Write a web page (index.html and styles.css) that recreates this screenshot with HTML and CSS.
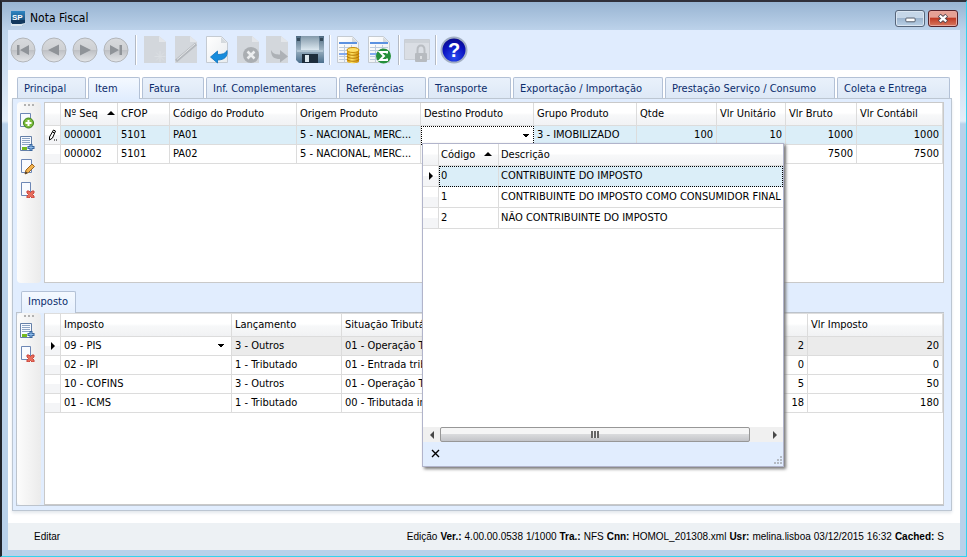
FILE: index.html
```html
<!DOCTYPE html>
<html lang="pt-BR">
<head>
<meta charset="utf-8">
<title>Nota Fiscal</title>
<link rel="stylesheet" href="styles.css">
</head>
<body>
<svg class="defs" aria-hidden="true">
  <defs>
    <linearGradient id="orb" x1="0" y1="0" x2="0" y2="1"><stop offset="0" stop-color="#d8dadd"/><stop offset=".48" stop-color="#cfd1d4"/><stop offset=".52" stop-color="#bfc1c5"/><stop offset="1" stop-color="#e4e6e9"/></linearGradient>
    <linearGradient id="paper" x1="0" y1="0" x2="1" y2="1"><stop offset="0" stop-color="#ffffff"/><stop offset="1" stop-color="#e9ecef"/></linearGradient>
    <linearGradient id="disk" x1="0" y1="0" x2="0" y2="1"><stop offset="0" stop-color="#4f6b82"/><stop offset=".5" stop-color="#9fb4c4"/><stop offset="1" stop-color="#4b6f8d"/></linearGradient>
    <linearGradient id="shutter" x1="0" y1="0" x2="0" y2="1"><stop offset="0" stop-color="#8399aa"/><stop offset="1" stop-color="#dce8f0"/></linearGradient>
    <linearGradient id="gold" x1="0" x2="1"><stop offset="0" stop-color="#d99a08"/><stop offset=".4" stop-color="#ffe468"/><stop offset="1" stop-color="#cc8800"/></linearGradient>
    <linearGradient id="app" x1="0" y1="0" x2="0" y2="1"><stop offset="0" stop-color="#2f86c4"/><stop offset="1" stop-color="#0b2f55"/></linearGradient>
    <radialGradient id="help" cx=".5" cy=".8" r=".8"><stop offset="0" stop-color="#2a4cf0"/><stop offset=".6" stop-color="#0a12c0"/><stop offset="1" stop-color="#0a0a84"/></radialGradient>
    <symbol id="page-off" viewBox="0 0 30 30"><path d="M4 1h15l7 6v21H4z" fill="#d3d7dc"/><path d="M19 1v6h7z" fill="#e3e6ea"/></symbol>
    <symbol id="page-on" viewBox="0 0 30 30"><path d="M4.500 1.500h15l6 6v20h-21z" fill="url(#paper)" stroke="#c5cbd2"/><path d="M19 2v6h6z" fill="#d5dade"/></symbol>
    <symbol id="sheet" viewBox="0 0 30 30"><path d="M3.500 1.500h15l6 6v20h-21z" fill="url(#paper)" stroke="#c5cbd2"/><path d="M18 2v6h6z" fill="#d5dade"/><path d="M5 7h18v2H5z" fill="#5b91e0"/><path d="M5 12.500h18M5 15.500h18M5 21.500h18M5 24.500h18M10.500 10v17M17.500 10v17" stroke="#bdcbdd"/><path d="M5 18h16v2H5z" fill="#82aaf0"/></symbol>
    <symbol id="add-lines" viewBox="0 0 16 16"><path d="M1.500.5h11v14h-11z" fill="#f7faff" stroke="#6580a8"/><path d="M3 2.500h8M3 4.500h8M3 6.500h8M3 8.500h8" stroke="#8ea5c4"/><path d="M3 11h5v3H3z" fill="#75b91f"/><path d="M12 8v7M8.500 11.500h7" stroke="#39669d" stroke-width="3"/><path d="M12 9v5M9.500 11.500h5" stroke="#8ebcec"/></symbol>
    <symbol id="remove" viewBox="0 0 16 16"><path d="M2.500.5h9v13h-9z" fill="#f9fbff" stroke="#6d87b5"/><path d="M8 9h2l1.500 1.500L13 9h2v2l-1.500 1.500L15 14v2h-2l-1.500-1.500L10 16H8v-2l1.500-1.500L8 11z" fill="#e76d5c" stroke="#c9473c"/></symbol>
  </defs>
</svg>
<div class="window">
  <header class="titlebar">
    <svg class="app-icon" viewBox="0 0 16 16"><path d="M1 1h14v12l-3 3H1z" fill="url(#app)"/><path d="M1 13l7-2 8 2-4 3H1z" fill="#d9e6ef"/><path d="M2 14h9l4-1v-3H1z" fill="#12385e"/><text x="2" y="10" class="app-mark">SP</text></svg>
    <h1>Nota Fiscal</h1>
    <button class="win-btn" aria-label="Minimizar"><svg viewBox="0 0 30 16"><rect x="10.500" y="7.500" width="10" height="4" rx="1" fill="#fff" stroke="#4b5463"/></svg></button>
    <button class="win-btn close" aria-label="Fechar"><svg viewBox="0 0 30 16"><path d="M11 4.500l8 7M19 4.500l-8 7" stroke="#4e4550" stroke-width="4.500"/><path d="M11.500 5l7 6M18.500 5l-7 6" stroke="#fff" stroke-width="2.500"/></svg></button>
  </header>
  <nav class="toolbar" aria-label="Ferramentas">
    <button aria-label="Primeiro"><svg viewBox="0 0 30 30"><circle cx="15" cy="15" r="12" fill="url(#orb)" stroke="#b3b6ba"/><path d="M9 10h2.500v10H9zM21 10v10l-9-5z" fill="#8f9398"/></svg></button>
    <button aria-label="Anterior"><svg viewBox="0 0 30 30"><circle cx="15" cy="15" r="12" fill="url(#orb)" stroke="#b3b6ba"/><path d="M20 9.500v11L9 15z" fill="#8f9398"/></svg></button>
    <button aria-label="Próximo"><svg viewBox="0 0 30 30"><circle cx="15" cy="15" r="12" fill="url(#orb)" stroke="#b3b6ba"/><path d="M10 9.500v11L21 15z" fill="#8f9398"/></svg></button>
    <button aria-label="Último"><svg viewBox="0 0 30 30"><circle cx="15" cy="15" r="12" fill="url(#orb)" stroke="#b3b6ba"/><path d="M18.500 10H21v10h-2.500zM9 10v10l9-5z" fill="#8f9398"/></svg></button>
    <span class="sep"></span>
    <button aria-label="Novo"><svg viewBox="0 0 30 30"><use href="#page-off"/><path d="M20 16v11M14.500 21.500h11M16 17.500l8 8M24 17.500l-8 8" stroke="#dbdfe3"/></svg></button>
    <button aria-label="Alterar"><svg viewBox="0 0 30 30"><use href="#page-off"/><path d="M5 26L25 9" stroke="#b4b8bd" stroke-width="3"/><path d="M6 24.500L24 9" stroke="#e6e8ea"/></svg></button>
    <button aria-label="Desfazer"><svg viewBox="0 0 30 30"><use href="#page-on"/><path d="M8.500 22l7-6v3.500c5 0 8-1 9.500-4 1 6-2.500 9.500-9.500 9.500v3z" fill="#168cdd" stroke="#0b71bd" stroke-width=".8"/></svg></button>
    <button aria-label="Cancelar"><svg viewBox="0 0 30 30"><use href="#page-off"/><circle cx="18" cy="20" r="8" fill="#aaaeb2"/><path d="M14.500 16.500l7 7M21.500 16.500l-7 7" stroke="#eceef0" stroke-width="2.500"/></svg></button>
    <button aria-label="Avançar"><svg viewBox="0 0 30 30"><g transform="translate(-2)"><use href="#page-off"/><path d="M9 15c2 4 5 4.500 9 4.500V15l8 6.500-8 6v-3.500c-6 0-9-2-9-9z" fill="#adb1b6"/></g></svg></button>
    <button aria-label="Salvar"><svg viewBox="0 0 30 30"><path d="M1 1h28v27H4l-3-3z" fill="url(#disk)"/><path d="M6 1h18v14H6z" fill="url(#shutter)"/><path d="M2 3h3v3H2zM25 3h3v3h-3z" fill="#334859"/><path d="M7 19h16v9H7z" fill="#1d2d3c"/><path d="M10 20h4v7h-4z" fill="#dce7ee"/><path d="M2 16h26" stroke="#cbdbe6"/></svg></button>
    <span class="sep"></span>
    <button aria-label="Financeiro"><svg viewBox="0 0 30 30"><use href="#sheet"/><path d="M13 15v11c0 3 12 3 12 0V15z" fill="url(#gold)"/><path d="M13 18c0 3 12 3 12 0M13 21c0 3 12 3 12 0M13 24c0 3 12 3 12 0" fill="none" stroke="#b57905"/><ellipse cx="19" cy="15" rx="6" ry="2.500" fill="#ffe067" stroke="#c78d0c"/></svg></button>
    <button aria-label="Totais"><svg viewBox="0 0 30 30"><use href="#sheet"/><circle cx="18.500" cy="21" r="7.500" fill="#25903a"/><path d="M22 18.500V17h-7l4 4-4 4h7v-1.500" fill="none" stroke="#fff" stroke-width="2"/></svg></button>
    <span class="sep tight"></span>
    <button aria-label="Bloquear"><svg viewBox="0 0 30 30"><path d="M2.500 4.500h25v20h-25z" fill="#dadee4" stroke="#c9ced5"/><path d="M3 5h24v3H3z" fill="#cdd2d8"/><path d="M15.500 18v-3c0-6 7-6 7 0v3" fill="none" stroke="#b9bdc2" stroke-width="2"/><rect x="13" y="18" width="12" height="9" rx="1" fill="#b7bbc0"/><path d="M19 21v3" stroke="#dcdfe2" stroke-width="2"/></svg></button>
    <span class="sep tight"></span>
    <button aria-label="Ajuda"><svg viewBox="0 0 30 30"><circle cx="15" cy="15" r="12.500" fill="url(#help)" stroke="#a2afc4" stroke-width="2"/><text x="15" y="22" text-anchor="middle" class="help-mark">?</text></svg></button>
  </nav>
  <main>
    <div class="tabs" role="tablist">
      <button role="tab">Principal</button><button role="tab" class="on" aria-selected="true">Item</button><button role="tab">Fatura</button><button role="tab">Inf. Complementares</button><button role="tab">Referências</button><button role="tab">Transporte</button><button role="tab">Exportação / Importação</button><button role="tab">Prestação Serviço / Consumo</button><button role="tab">Coleta e Entrega</button>
    </div>
    <div class="panel">
      <section class="items">
        <div class="side">
          <i class="grip"></i>
          <button aria-label="Adicionar item"><svg viewBox="0 0 16 16"><path d="M1.500.5h10v13h-10z" fill="#f9fbff" stroke="#6d87b5"/><circle cx="9.500" cy="10" r="5" fill="#7dbb3a" stroke="#3d8418"/><path d="M9.500 7v6M6.500 10h6" stroke="#fff" stroke-width="2"/></svg></button>
          <button aria-label="Adicionar vários"><svg><use href="#add-lines"/></svg></button>
          <button aria-label="Editar item"><svg viewBox="0 0 16 16"><path d="M2.500.5h10v13h-10z" fill="#f9fbff" stroke="#6d87b5"/><path d="M6 15l1-4 6-6 2.500 2.500-6 6z" fill="#f1b24d" stroke="#9a6322"/><path d="M6 15l.8-2.500L8.500 14z" fill="#333"/></svg></button>
          <button aria-label="Remover item"><svg><use href="#remove"/></svg></button>
        </div>
        <div class="grid">
          <table>
            <colgroup><col class="c-sel"><col class="c-seq"><col class="c-cfop"><col class="c-cod"><col class="c-ori"><col class="c-des"><col class="c-gru"><col class="c-qtd"><col class="c-uni"><col class="c-bru"><col></colgroup>
            <thead><tr><th></th><th>Nº Seq<i class="sort"></i></th><th>CFOP</th><th>Código do Produto</th><th>Origem Produto</th><th>Destino Produto</th><th>Grupo Produto</th><th>Qtde</th><th>Vlr Unitário</th><th>Vlr Bruto</th><th>Vlr Contábil</th></tr></thead>
            <tbody>
              <tr class="current"><th class="sel"><svg class="pencil" viewBox="0 0 9 12"><path d="M5.500 1l2 1-3 7-3 2V8z" fill="#fff" stroke="#000"/><path d="M4.500 3l2 1M6 11h1M8 11h1" stroke="#000"/></svg></th><td>000001</td><td>5101</td><td>PA01</td><td>5 - NACIONAL, MERC...</td>
                <td class="editing"><div class="combo"><select aria-label="Destino Produto"><option></option></select>
                  <div class="popup">
                    <table>
                      <colgroup><col class="c-sel"><col class="c-key"><col></colgroup>
                      <thead><tr><th></th><th>Código<i class="sort"></i></th><th>Descrição</th></tr></thead>
                      <tbody>
                        <tr class="picked"><th class="sel"><i class="pointer"></i></th><td>0</td><td>CONTRIBUINTE DO IMPOSTO</td></tr>
                        <tr><th class="sel"></th><td>1</td><td>CONTRIBUINTE DO IMPOSTO COMO CONSUMIDOR FINAL</td></tr>
                        <tr><th class="sel"></th><td>2</td><td>NÃO CONTRIBUINTE DO IMPOSTO</td></tr>
                      </tbody>
                    </table>
                    <div class="scroll"><button aria-label="Rolar à esquerda"><i class="pointer back"></i></button><span class="track"><span class="thumb"><i></i></span></span><button aria-label="Rolar à direita"><i class="pointer"></i></button></div>
                    <div class="popup-foot"><button aria-label="Fechar lista"><svg viewBox="0 0 9 9"><path d="M1 1l7 7M8 1L1 8" stroke="#000" stroke-width="1.400"/></svg></button><svg class="resize" viewBox="0 0 9 9"><path d="M7 1h2M4 4h2M7 4h2M1 7h2M4 7h2M7 7h2" stroke="#b4bac3" stroke-width="2"/></svg></div>
                  </div>
                </div></td>
                <td>3 - IMOBILIZADO</td><td class="num">100</td><td class="num">10</td><td class="num">1000</td><td class="num">1000</td></tr>
              <tr><th class="sel"></th><td>000002</td><td>5101</td><td>PA02</td><td>5 - NACIONAL, MERC...</td><td></td><td></td><td></td><td></td><td class="num">7500</td><td class="num">7500</td></tr>
            </tbody>
          </table>
        </div>
      </section>
      <div class="subtabs" role="tablist"><button role="tab" aria-selected="true">Imposto</button></div>
      <section class="taxes">
        <div class="side">
          <i class="grip"></i>
          <button aria-label="Adicionar imposto"><svg><use href="#add-lines"/></svg></button>
          <button aria-label="Remover imposto"><svg><use href="#remove"/></svg></button>
        </div>
        <div class="grid">
          <table>
            <colgroup><col class="c-sel"><col class="c-imp"><col class="c-lan"><col><col class="c-ali"><col class="c-vlr"></colgroup>
            <thead><tr><th></th><th>Imposto</th><th>Lançamento</th><th>Situação Tributária</th><th></th><th>Vlr Imposto</th></tr></thead>
            <tbody>
              <tr class="focus"><th class="sel"><i class="pointer"></i></th><td class="choice"><select aria-label="Imposto"><option>09 - PIS</option></select></td><td>3 - Outros</td><td>01 - Operação Tributável</td><td class="num">2</td><td class="num">20</td></tr>
              <tr><th class="sel"></th><td>02 - IPI</td><td>1 - Tributado</td><td>01 - Entrada tributada</td><td class="num">0</td><td class="num">0</td></tr>
              <tr><th class="sel"></th><td>10 - COFINS</td><td>3 - Outros</td><td>01 - Operação Tributável</td><td class="num">5</td><td class="num">50</td></tr>
              <tr><th class="sel"></th><td>01 - ICMS</td><td>1 - Tributado</td><td>00 - Tributada integralmente</td><td class="num">18</td><td class="num">180</td></tr>
            </tbody>
          </table>
        </div>
      </section>
    </div>
  </main>
  <footer class="status"><span>Editar</span><span class="info"><span>Edição</span><b>Ver.:</b><span>4.00.00.0538</span><span>1/1000</span><b>Tra.:</b><span>NFS</span><b>Cnn:</b><span>HOMOL_201308.xml</span><b>Usr:</b><span>melina.lisboa</span><span>03/12/2015</span><span>16:32</span><b>Cached:</b><span>S</span></span></footer>
</div>
</body>
</html>
```
FILE: styles.css
```css
* { box-sizing: border-box; }
body { margin: 0; font-family: Tahoma, "DejaVu Sans Condensed", "DejaVu Sans", sans-serif; font-size: 11px; line-height: 14px; color: #000; }
button, select { font: inherit; color: inherit; border: 0; padding: 0; margin: 0; background: none; }
.defs { position: absolute; width: 0; height: 0; }
.window { height: 100vh; display: flex; flex-direction: column; padding: 0 6px 6px; border: 1px solid #35d3ee; border-top: 2px solid #30303a; border-left: 2px solid #20242c; background: linear-gradient(#98b4d2, #bcd2ea 28px, #e4eef9 119px, #b9d1ea 122px); }
.titlebar { height: 28px; display: flex; align-items: center; gap: 3px; padding: 4px 2px 0; }
.app-icon { width: 16px; height: 16px; margin-right: 1px; }
.app-mark { font: bold 8px "Liberation Sans", sans-serif; fill: #fff; }
h1 { flex: 1; margin: 0; font-size: 12px; font-weight: normal; }
.win-btn { width: 30px; height: 17px; border: 1px solid #56657a; border-radius: 3px; box-shadow: inset 0 0 0 1px #dbe6f2; background: linear-gradient(#c5d6e8 45%, #9db5cf 50%, #b9d0e6); }
.win-btn svg { display: block; width: 100%; height: 100%; }
.win-btn.close { border-color: #55222a; box-shadow: inset 0 0 0 1px #e8a79e; background: linear-gradient(#e5a195 40%, #c03c26 50%, #d7785f); }
.toolbar { height: 40px; display: flex; align-items: center; background: #e0ecfe; }
.toolbar button { width: 31px; height: 32px; }
.toolbar svg { display: block; width: 30px; height: 30px; }
.sep { width: 2px; height: 30px; margin: 0 3px; border-left: 1px solid #b4bac4; border-right: 1px solid #fff; }
.sep.tight { margin: 0 2px; }
.help-mark { font: bold 20px "Liberation Sans", sans-serif; fill: #fff; }
main { flex: 1; min-height: 0; display: flex; flex-direction: column; padding: 7px 8px 12px 4px; background: #fff; }
.tabs { display: grid; grid-template-columns: 69fr 52fr 62fr 131fr 87fr 83fr 150fr 170fr 113fr; gap: 2px; margin: 0 2px 0 5px; height: 21px; }
.tabs button, .subtabs button { text-align: left; padding: 0 6px; white-space: nowrap; color: #0b2c6c; border: 1px solid #b3c1d6; border-bottom: 0; border-radius: 2px 2px 0 0; background: linear-gradient(#e9f1fb, #dde8f6); }
.tabs .on { height: 22px; z-index: 1; background: linear-gradient(#f4f9ff, #e1edfe); }
.panel { flex: 1; min-height: 0; display: flex; flex-direction: column; padding: 3px 7px 4px 4px; border: 1px solid #bcc6d2; background: #e1edfe; box-shadow: 0 2px 3px #e3e7ec; }
.items { flex: 181 1 0; min-height: 0; display: flex; gap: 3px; }
.taxes { flex: 193 1 0; min-height: 0; display: flex; gap: 3px; border: 1px solid #bcc3cc; border-width: 1px 0 1px 1px; margin-left: -1px; }
.side { width: 24px; display: flex; flex-direction: column; align-items: center; border-radius: 4px; background: linear-gradient(90deg, #fcfcfc, #ebebeb); }
.grip { width: 10px; height: 2px; margin: 2px 0 3px; background: repeating-linear-gradient(90deg, #b2b2b2 0 2px, transparent 2px 4px); }
.side button { width: 20px; height: 23px; display: flex; align-items: center; }
.side svg { display: block; width: 16px; height: 16px; }
.grid { flex: 1; min-width: 0; border: 1px solid #c9c9c9; background: #fff; }
.taxes .grid { border-top-color: #ddd; }
table { width: 100%; table-layout: fixed; border-collapse: separate; border-spacing: 0; }
th, td { height: 19px; padding: 0 3px; font-weight: normal; text-align: left; white-space: nowrap; overflow: hidden; border-right: 1px solid #dcdcdc; border-bottom: 1px solid #dcdcdc; }
thead th { height: 23px; background: linear-gradient(#fff 45%, #f7f8f9 55%, #f1f2f4); }
.sel { padding: 0; text-align: center; background: linear-gradient(#fff 50%, #f4f5f7 50%); }
.num { text-align: right; }
.c-sel { width: 16px; }
.c-seq { width: 57px; }
.c-cfop { width: 52px; }
.c-cod { width: 127px; }
.c-ori { width: 124px; }
.c-des { width: 113px; }
.c-gru { width: 103px; }
.c-qtd { width: 80px; }
.c-uni { width: 69px; }
.c-bru { width: 71px; }
.c-imp { width: 171px; }
.c-lan { width: 110px; }
.c-ali { width: 107px; }
.c-vlr { width: 135px; }
.c-key { width: 60px; }
.current > td { background: #dbeef8; }
.focus > td { background: #ebebeb; }
.focus > .choice { background: #fff; }
.sort { display: inline-block; margin-left: 9px; vertical-align: 2px; border: 4px solid transparent; border-top: 0; border-bottom-color: #000; }
.pointer { display: inline-block; vertical-align: middle; border: 4px solid transparent; border-right: 0; border-left-color: #000; }
.pointer.back { transform: rotate(180deg); }
.pencil { display: block; width: 9px; height: 12px; margin: 0 auto; }
select { display: block; width: 100%; height: 18px; appearance: none; border-radius: 0; }
.choice select, .combo select { background: linear-gradient(225deg, #000 50%, transparent 50%) no-repeat right 7px center / 4px 4px, linear-gradient(135deg, #000 50%, transparent 50%) no-repeat right 3px center / 4px 4px; }
td.editing { padding: 0; overflow: visible; background: #fff; border: 0; }
.combo { position: relative; }
.combo select { height: 19px; border: 1px dotted #000; }
.popup { position: absolute; z-index: 5; top: 17px; left: 1px; width: 362px; height: 324px; display: flex; flex-direction: column; border: 1px solid #b1b4cb; background: #fff; box-shadow: 2px 2px 3px #777; }
.popup table { flex: none; }
.popup th, .popup td { padding: 0 2px; }
.popup thead th { height: 22px; }
.popup td, .popup .sel { height: 21px; }
.popup td:last-child, .popup th:last-child { border-right: 0; }
.popup .picked td { padding-bottom: 1px; background: #dbeef8; border: 1px dotted #000; }
.popup .picked td:nth-child(2) { padding-left: 1px; border-right: 1px solid #dcdcdc; }
.popup .picked td:last-child { border-left: 0; }
.scroll { margin-top: auto; height: 15px; display: flex; background: #f0f0f0; }
.scroll button { width: 17px; opacity: .7; line-height: 10px; }
.track { flex: 1; }
.thumb { display: flex; align-items: center; justify-content: center; width: 95%; height: 15px; border: 1px solid #979797; border-radius: 2px; background: linear-gradient(#f5f5f5 45%, #d9dadc 50%, #c3c4c8); }
.thumb i { width: 8px; height: 7px; background: repeating-linear-gradient(90deg, #666 0 2px, #eee 2px 3px); }
.popup-foot { height: 24px; display: flex; justify-content: space-between; padding: 0 1px 1px 8px; background: #e1edfe; }
.popup-foot svg { display: block; width: 9px; height: 9px; }
.popup-foot .resize { align-self: flex-end; }
.subtabs { height: 29px; display: flex; align-items: flex-end; padding-left: 4px; }
.subtabs button { height: 22px; width: 55px; z-index: 1; margin-bottom: -1px; background: linear-gradient(#f4f9ff, #e6f0fe); }
.status { height: 27px; display: flex; align-items: center; justify-content: space-between; padding: 0 16px 0 26px; font-family: "Liberation Sans", Arial, sans-serif; font-size: 10px; background: #edf1f4; }
.info { display: flex; gap: 3px; }
```
